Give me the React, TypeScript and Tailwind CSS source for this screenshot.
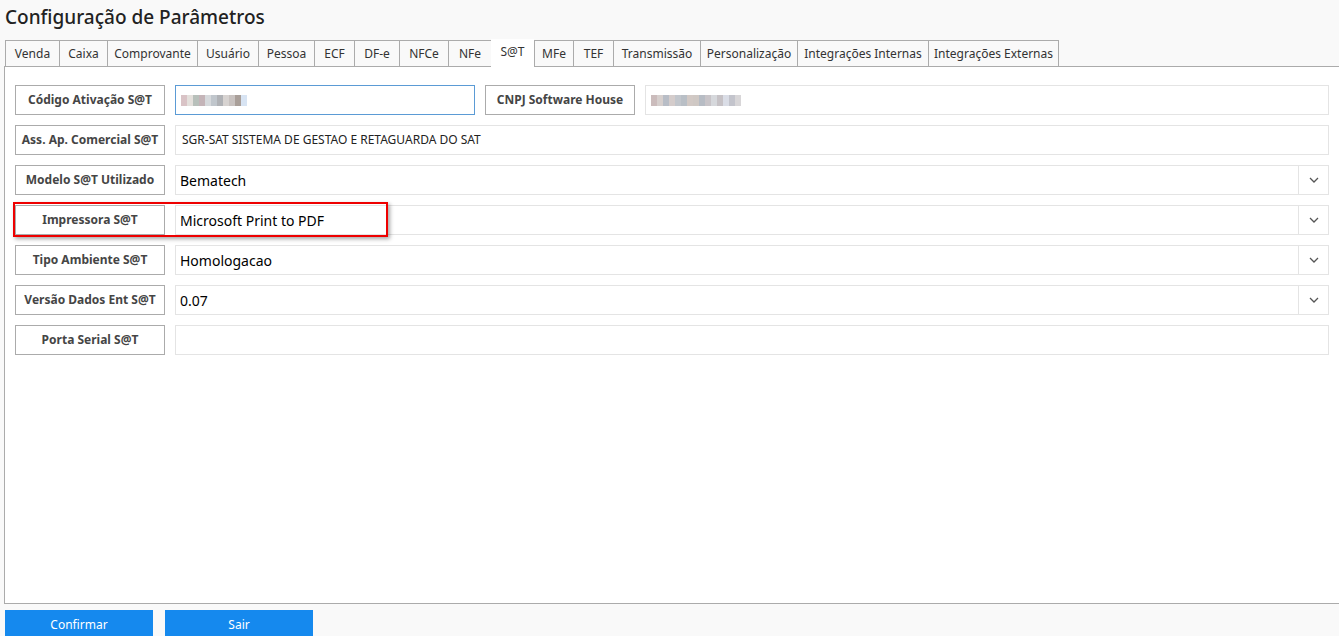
import React from "react";

const tabs: [string, number][] = [
  ["Venda", 54],
  ["Caixa", 48],
  ["Comprovante", 90],
  ["Usuário", 61],
  ["Pessoa", 56],
  ["ECF", 40],
  ["DF-e", 45],
  ["NFCe", 49],
  ["NFe", 43],
  ["S@T", 43],
  ["MFe", 39],
  ["TEF", 40],
  ["Transmissão", 87],
  ["Personalização", 97],
  ["Integrações Internas", 131],
  ["Integrações Externas", 131],
];

function Blur({ colors }: { colors: string[] }) {
  return (
    <div className="flex h-[11px] blur-[0.5px]">
      {colors.map((c, i) => (
        <div key={i} className="h-full w-[6px]" style={{ background: c }} />
      ))}
    </div>
  );
}

function Label({ text, className = "" }: { text: string; className?: string }) {
  return (
    <div
      className={
        "flex h-[30px] w-[150px] shrink-0 items-center justify-center border border-[#ababab] bg-white text-[12px] font-bold text-[#454545] " +
        className
      }
    >
      {text}
    </div>
  );
}

function Chevron() {
  return (
    <svg width="10" height="6" viewBox="0 0 10 6" fill="none">
      <path d="M1 1l4 4 4-4" stroke="#555" strokeWidth="1.3" />
    </svg>
  );
}

function Select({ value }: { value: string }) {
  return (
    <div className="flex h-[30px] flex-1 items-stretch border border-[#e4e4e4] bg-white">
      <div className="flex flex-1 items-center pl-[4px] text-[14px] text-black">{value}</div>
      <div className="flex w-[30px] items-center justify-center border-l border-[#e4e4e4]">
        <Chevron />
      </div>
    </div>
  );
}

export default function App() {
  return (
    <div
      className="flex h-[636px] w-[1339px] flex-col overflow-hidden bg-[#f9f9f9] text-[#333]"
      style={{ fontFamily: '"Noto Sans", "Open Sans", sans-serif' }}
    >
      <div className="h-[40px] shrink-0 pl-[5px] pt-[3px] text-[19px] font-medium leading-[28px] text-[#222]">
        Configuração de Parâmetros
      </div>
      <div className="flex h-[26px] shrink-0 items-stretch pl-[5px]">
        {tabs.map(([t, w], i) => {
          const active = t === "S@T";
          const last = i === tabs.length - 1;
          return (
            <div
              key={t}
              style={{ width: w }}
              className={
                "flex items-center justify-center text-[12px] " +
                (active
                  ? "relative z-10 -mt-[1px] mb-[-1px] bg-white pb-[3px] text-[#333]"
                  : "border-t border-l border-[#ababab] bg-[#f9f9f9] pt-[1px] text-[#333]") +
                (last ? " border-r" : "")
              }
            >
              {t}
            </div>
          );
        })}
      </div>
      <div className="ml-[4px] flex h-[538px] shrink-0 flex-col gap-[10px] border-t border-l border-b border-[#ababab] bg-white pl-[10px] pr-[10px] pt-[18px]">
        <div className="flex gap-[10px]">
          <Label text="Código Ativação S@T" />
          <div className="flex h-[30px] w-[300px] items-center border border-[#5b9bd5] bg-white pl-[5px]">
            <Blur
              colors={["#d9c3c6", "#e4e0dc", "#b8c0bb", "#c4b4b8", "#d6d9dc", "#c0c6cc", "#b0b2b6", "#d7d3d1", "#c8c2c0", "#a99f99", "#d8e4f3"]}
            />
          </div>
          <Label text="CNPJ Software House" />
          <div className="flex h-[30px] flex-1 items-center border border-[#e4e4e4] bg-white pl-[5px]">
            <Blur
              colors={["#cbbcbc", "#d6cfcd", "#b8bdc6", "#d4cccb", "#c2c6cc", "#b9bfc6", "#d2c9c5", "#cfc8c4", "#b7bcc4", "#c8c4c8", "#d6d8dc", "#c6c2c6", "#dadde6", "#c3c4cc", "#d8d6d8"]}
            />
          </div>
        </div>
        <div className="flex gap-[10px]">
          <Label text="Ass. Ap. Comercial S@T" />
          <div className="flex h-[30px] flex-1 items-center border border-[#e4e4e4] bg-white pl-[6px] text-[12px] text-[#222]">
            SGR-SAT SISTEMA DE GESTAO E RETAGUARDA DO SAT
          </div>
        </div>
        <div className="flex gap-[10px]">
          <Label text="Modelo S@T Utilizado" />
          <Select value="Bematech" />
        </div>
        <div className="relative flex gap-[10px]">
          <Label text="Impressora S@T" />
          <Select value="Microsoft Print to PDF" />
          <div className="pointer-events-none absolute left-[-2px] top-[-3px] h-[35px] w-[375px] border-2 border-[#ee0000] shadow-[2px_2px_4px_rgba(0,0,0,0.35)]" />
        </div>
        <div className="flex gap-[10px]">
          <Label text="Tipo Ambiente S@T" />
          <Select value="Homologacao" />
        </div>
        <div className="flex gap-[10px]">
          <Label text="Versão Dados Ent S@T" />
          <Select value="0.07" />
        </div>
        <div className="flex gap-[10px]">
          <Label text="Porta Serial S@T" />
          <div className="h-[30px] flex-1 border border-[#e4e4e4] bg-white" />
        </div>
      </div>
      <div className="mt-[6px] flex shrink-0 gap-[12px] pl-[5px]">
        <button className="flex h-[32px] w-[148px] items-center justify-center bg-[#1589ee] pb-[3px] text-[12px] text-white">
          Confirmar
        </button>
        <button className="flex h-[32px] w-[148px] items-center justify-center bg-[#1589ee] pb-[3px] text-[12px] text-white">
          Sair
        </button>
      </div>
    </div>
  );
}
